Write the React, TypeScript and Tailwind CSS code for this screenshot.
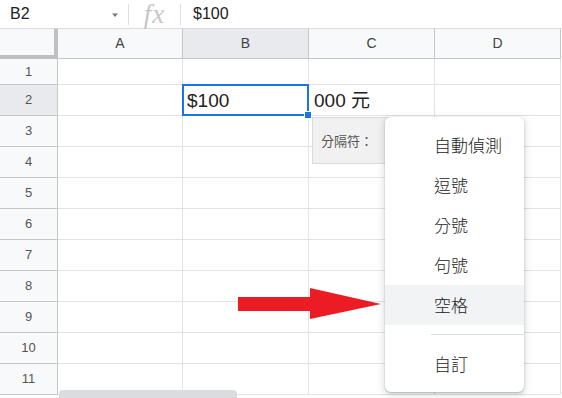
import React from "react";

const cols = [
  { name: "A", w: "w-[125px]" },
  { name: "B", w: "w-[126px]" },
  { name: "C", w: "w-[126px]" },
  { name: "D", w: "w-[126px]" },
];

const rows = [1, 2, 3, 4, 5, 6, 7, 8, 9, 10, 11];

export default function App() {
  return (
    <div className="relative w-[562px] h-[398px] overflow-hidden bg-white font-['Liberation_Sans',Arial,sans-serif] text-[#202124]">
      {/* Formula bar */}
      <div className="flex h-[29px] items-center border-b border-[#dadce0]">
        <div className="flex w-[128px] items-center pl-[10px] pr-[9px]">
          <span className="flex-1 text-[16px] text-[#202124]">B2</span>
          <svg width="8" height="5" viewBox="0 0 8 5" className="mt-[2px]">
            <path d="M1 0.5 L7 0.5 L4 4 Z" fill="#777" />
          </svg>
        </div>
        <div className="h-[21px] w-px bg-[#e0e0e0]" />
        <div className="flex w-[51px] items-center justify-center">
          <span className="font-['Liberation_Serif',serif] text-[27px] italic leading-none tracking-[1px] text-[#c6c6c6]">
            fx
          </span>
        </div>
        <div className="h-[21px] w-px bg-[#e0e0e0]" />
        <div className="pl-[12px] text-[16px] text-[#202124]">$100</div>
      </div>

      {/* Column header row */}
      <div className="flex h-[30px]">
        <div className="w-[58px] border-r-[4px] border-b-[4px] border-[#c0c0c0] bg-[#f8f9fa]" />
        {cols.map((c) => (
          <div
            key={c.name}
            className={`${c.w} flex items-center justify-center border-r border-b border-[#c4c7c5] text-[14px] text-[#444] ${
              c.name === "B" ? "bg-[#e8eaed]" : "bg-[#f8f9fa]"
            }`}
          >
            {c.name}
          </div>
        ))}
      </div>

      {/* Body rows */}
      {rows.map((r) => (
        <div key={r} className={`flex ${r === 1 ? "h-[26px]" : "h-[31px]"}`}>
          <div
            className={`flex w-[58px] items-center justify-center border-r border-b border-[#c4c7c5] text-[13px] text-[#555] ${
              r === 2 ? "bg-[#e8eaed]" : "bg-[#f8f9fa]"
            }`}
          >
            {r}
          </div>
          {cols.map((c) => (
            <div
              key={c.name}
              className={`${c.w} flex items-center whitespace-nowrap border-r border-b border-[#e2e3e3] text-[19px] text-[#222]`}
            >
              {r === 2 && c.name === "B" ? <span className="pl-[4px] pt-[2px]">$100</span> : null}
              {r === 2 && c.name === "C" ? (
                <span className="pl-[5px] pt-[2px] font-['Liberation_Sans','Noto_Sans_CJK_TC',sans-serif]">000 元</span>
              ) : null}
            </div>
          ))}
        </div>
      ))}

      {/* Selection */}
      <div className="absolute left-[182px] top-[84px] h-[32px] w-[127px] border-2 border-[#1a73e8]" />
      <div className="absolute left-[304px] top-[111px] h-[8px] w-[8px] border border-white bg-[#1a73e8]" />

      {/* Separator tooltip */}
      <div className="absolute left-[312px] top-[117px] flex h-[47px] w-[90px] items-center border border-[#dadada] bg-[#f1f1f1] pl-[8px] font-['Noto_Sans_CJK_TC',sans-serif] text-[13px] text-[#555]">
        分隔符：
      </div>

      {/* Menu */}
      <div className="absolute left-[385px] top-[117px] w-[139px] rounded-[6px] bg-white py-[8px] font-['Noto_Sans_CJK_TC',sans-serif] text-[17px] font-light text-[#222] shadow-[0_2px_6px_2px_rgba(60,64,67,0.15),0_1px_2px_rgba(60,64,67,0.3)]">
        {["自動偵測", "逗號", "分號", "句號", "空格"].map((t) => (
          <div
            key={t}
            className={`flex h-[40px] items-center pl-[49px] ${t === "空格" ? "bg-[#f1f3f4]" : ""}`}
          >
            {t}
          </div>
        ))}
        <div className="my-[9px] ml-[46px] h-px bg-[#dadce0]" />
        <div className="flex h-[40px] items-center pl-[49px]">自訂</div>
      </div>

      {/* Red arrow */}
      <svg className="absolute left-[237px] top-[287px]" width="146" height="34" viewBox="0 0 146 34">
        <rect x="1" y="10" width="74" height="14" fill="#ec1c24" />
        <polygon points="73,1 144,17 73,32" fill="#ec1c24" />
      </svg>

      {/* Horizontal scrollbar */}
      <div className="absolute left-[59px] top-[390px] h-[12px] w-[178px] rounded-[4px] bg-[#dadce0]" />
    </div>
  );
}
